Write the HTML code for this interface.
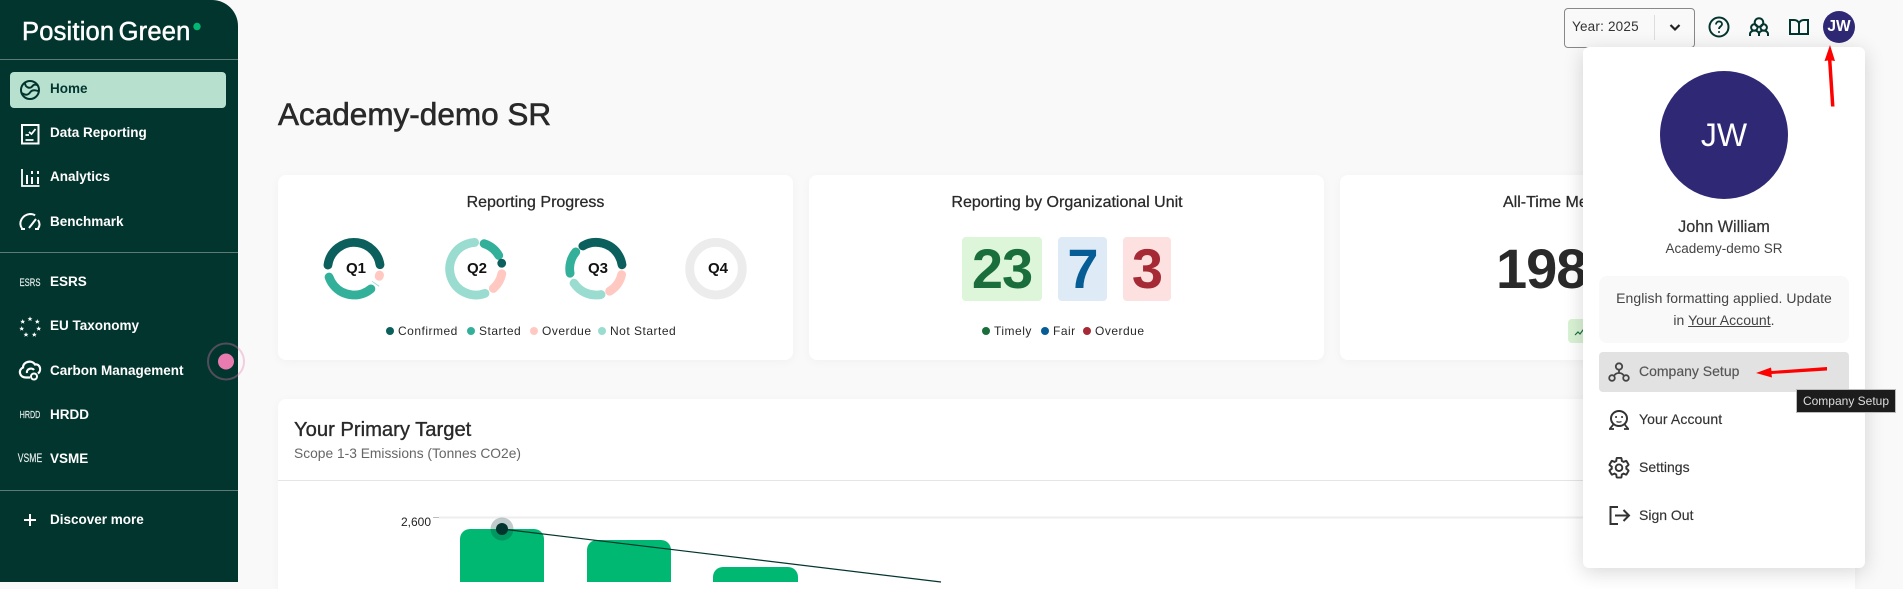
<!DOCTYPE html>
<html lang="en"><head><meta charset="utf-8"><title>Academy-demo SR</title>
<style>
html,body{margin:0;padding:0;width:1903px;height:582px;overflow:hidden;background:#f9f9f9;font-family:"Liberation Sans",sans-serif;color:#292929}
.a{position:absolute}
.t{position:absolute;white-space:nowrap;line-height:20px;height:20px}
.c{transform:translateX(-50%)}
#side{left:0;top:0;width:238px;height:582px;background:#03352f;border-top-right-radius:26px;overflow:hidden}
.n{font-size:13.5px;font-weight:700;color:#fff;left:50px}
.hr{left:0;width:238px;height:1px;background:#5c7b77}
.sm{color:#e8efee;-webkit-text-stroke:.15px #e8efee}
.card{background:#fff;border-radius:8px;box-shadow:0 2px 10px rgba(0,0,0,.035)}
.h{font-size:16px;color:#292929;-webkit-text-stroke:.25px #292929}
.l{font-size:12px;letter-spacing:.5px;color:#292929}
.q{font-size:15px;font-weight:700;color:#111}
.big{font-size:56px;font-weight:700;line-height:64px;text-align:center;border-radius:4px;letter-spacing:-1px}
.m{font-size:14px;left:1639px;color:#333;-webkit-text-stroke:.15px #333}
svg{position:absolute;left:0;top:0;overflow:visible}
</style></head><body>

<div id="side" class="a">
<div class="t" style="left:22px;top:17px;font-size:25.500px;line-height:30px;height:30px;color:#fff;letter-spacing:.2px;word-spacing:-3px;-webkit-text-stroke:.5px #fff">Position Green</div>
<div class="a hr" style="top:59px"></div>
<div class="a" style="left:10px;top:72px;width:216px;height:36px;background:#b7e0cf;border-radius:4px"></div>
<div class="t n" style="top:79px;color:#03352f">Home</div>
<div class="t n" style="top:123px">Data Reporting</div>
<div class="t n" style="top:167px">Analytics</div>
<div class="t n" style="top:212px">Benchmark</div>
<div class="a hr" style="top:252px"></div>
<div class="t sm" style="left:30px;top:273px;font-size:11px;transform:translateX(-50%) scaleX(.7)">ESRS</div><div class="t n" style="top:272px">ESRS</div>
<div class="t n" style="top:316px">EU Taxonomy</div>
<div class="t n" style="top:361px">Carbon Management</div>
<div class="t sm" style="left:30px;top:405px;font-size:10.500px;transform:translateX(-50%) scaleX(.68)">HRDD</div><div class="t n" style="top:405px">HRDD</div>
<div class="t sm" style="left:30px;top:449px;font-size:11.500px;transform:translateX(-50%) scaleX(.75)">VSME</div><div class="t n" style="top:449px">VSME</div>
<div class="a hr" style="top:490px"></div>
<div class="t n" style="top:510px">Discover more</div>
<svg width="238" height="582" fill="none" stroke="#fff" stroke-width="2">
<circle cx="197" cy="26.500" r="3.700" fill="#00b871" stroke="none"/>
<g stroke="#03352f"><circle cx="30" cy="90" r="9"/><path d="M21.500 93c2.500 1.500 5 2.500 7 1s2-3 4-3.500 5 0 6.500 1M25 82.500c0 3 1 4 3 5 3 1 4-1 5-2s3-1 5 0"/></g>
<rect x="22" y="125" width="16.500" height="18.500"/>
<path d="M29 132l2.500 2 4-5M25.500 135h3.500M25.500 140h8" stroke-width="1.800"/>
<path d="M22 169v17h17.500" stroke-width="1.800"/><path d="M27 175v9M32 171v3M32 177v7M38 171v3M38 177v7" stroke-width="2"/>
<path d="M22 228.500c-4-6 0-13.500 8-14.500 2 0 4 .5 5 1.500M38 220c2 3 2 6 0 8.500M29 228l7-9M21 229h4M35 229h4" stroke-width="2"/>
<g fill="#fff" stroke="none">
<polygon transform="translate(30 319)" points="0,-2.6 .7,-.8 2.5,-.8 1.100,.3 1.600,2.100 0,1 -1.600,2.100 -1.100,.3 -2.500,-.8 -.7,-.8"/>
<polygon transform="translate(37.300 321.700)" points="0,-2.6 .7,-.8 2.5,-.8 1.100,.3 1.600,2.100 0,1 -1.600,2.100 -1.100,.3 -2.500,-.8 -.7,-.8"/>
<polygon transform="translate(38.700 328.700)" points="0,-2.6 .7,-.8 2.5,-.8 1.100,.3 1.600,2.100 0,1 -1.600,2.100 -1.100,.3 -2.500,-.8 -.7,-.8"/>
<polygon transform="translate(34.300 334.700)" points="0,-2.6 .7,-.8 2.5,-.8 1.100,.3 1.600,2.100 0,1 -1.600,2.100 -1.100,.3 -2.500,-.8 -.7,-.8"/>
<polygon transform="translate(26 334.700)" points="0,-2.6 .7,-.8 2.5,-.8 1.100,.3 1.600,2.100 0,1 -1.600,2.100 -1.100,.3 -2.500,-.8 -.7,-.8"/>
<polygon transform="translate(21.700 328.700)" points="0,-2.6 .7,-.8 2.5,-.8 1.100,.3 1.600,2.100 0,1 -1.600,2.100 -1.100,.3 -2.500,-.8 -.7,-.8"/>
<polygon transform="translate(22.700 321.700)" points="0,-2.6 .7,-.8 2.5,-.8 1.100,.3 1.600,2.100 0,1 -1.600,2.100 -1.100,.3 -2.500,-.8 -.7,-.8"/>
</g>
<path d="M30 377.500h-4c-7 0-8-8-3-10 0-6 9-8 12-3 5-1 7 6 3 9M27 373c-1-4 5-6 7-3" stroke-width="2.200"/><circle cx="34" cy="376.500" r="3" stroke-width="2"/>
<path d="M30 514v12M24 520h12" stroke-width="2"/>
</svg>
</div>

<!-- main -->
<div class="t" style="left:278px;top:94px;line-height:40px;height:40px;font-size:31.500px;color:#292929;-webkit-text-stroke:.6px #292929">Academy-demo SR</div>

<div class="a card" style="left:278px;top:175px;width:515px;height:185px"></div>
<div class="a card" style="left:809px;top:175px;width:515px;height:185px"></div>
<div class="a card" style="left:1340px;top:175px;width:515px;height:185px"></div>
<div class="t h c" style="left:535.500px;top:193px">Reporting Progress</div>
<svg width="1903" height="582" fill="none" stroke-width="8.800" stroke-linecap="round">
<!-- Q1 -->
<circle cx="354" cy="268.700" r="26.300" pathLength="360" stroke="#0b5f5c" stroke-dasharray="164 999" transform="rotate(188 354 268.700)"/>
<circle cx="354" cy="268.700" r="26.300" pathLength="360" stroke="#ffc9c2" stroke-dasharray="3 999" transform="rotate(14 354 268.700)"/>
<circle cx="354" cy="268.700" r="26.300" pathLength="360" stroke="#9adccf" stroke-dasharray="2 999" stroke-linecap="butt" transform="rotate(34 354 268.700)"/>
<circle cx="354" cy="268.700" r="26.300" pathLength="360" stroke="#33b09a" stroke-dasharray="112 999" transform="rotate(50 354 268.700)"/>
<!-- Q2 -->
<circle cx="476" cy="268.700" r="26.300" pathLength="360" stroke="#9adccf" stroke-dasharray="198 999" transform="rotate(70 476 268.700)"/>
<circle cx="476" cy="268.700" r="26.300" pathLength="360" stroke="#33b09a" stroke-dasharray="42 999" transform="rotate(-72 476 268.700)"/>
<circle cx="476" cy="268.700" r="26.300" pathLength="360" stroke="#0b5f5c" stroke-dasharray=".1 999" transform="rotate(-12 476 268.700)"/>
<circle cx="476" cy="268.700" r="26.300" pathLength="360" stroke="#ffc9c2" stroke-dasharray="38 999" transform="rotate(11 476 268.700)"/>
<!-- Q3 -->
<circle cx="596" cy="268.700" r="26.300" pathLength="360" stroke="#0b5f5c" stroke-dasharray="112 999" transform="rotate(240 596 268.700)"/>
<circle cx="596" cy="268.700" r="26.300" pathLength="360" stroke="#ffc9c2" stroke-dasharray="46 999" transform="rotate(13 596 268.700)"/>
<circle cx="596" cy="268.700" r="26.300" pathLength="360" stroke="#9adccf" stroke-dasharray="68 999" transform="rotate(79 596 268.700)"/>
<circle cx="596" cy="268.700" r="26.300" pathLength="360" stroke="#33b09a" stroke-dasharray="50 999" transform="rotate(170 596 268.700)"/>
<!-- Q4 -->
<circle cx="716" cy="268.700" r="26.300" stroke="#ececec"/>
<g stroke="none">
<circle cx="390" cy="331" r="4" fill="#0b5f5c"/><circle cx="471" cy="331" r="4" fill="#33b09a"/><circle cx="534" cy="331" r="4" fill="#ffc9c2"/><circle cx="602" cy="331" r="4" fill="#9adccf"/>
<circle cx="986" cy="331" r="4" fill="#1a6e3c"/><circle cx="1045" cy="331" r="4" fill="#065d95"/><circle cx="1087" cy="331" r="4" fill="#a52a35"/>
</g>
</svg>
<div class="t c q" style="left:356px;top:259px">Q1</div>
<div class="t c q" style="left:477px;top:259px">Q2</div>
<div class="t c q" style="left:598px;top:259px">Q3</div>
<div class="t c q" style="left:718px;top:259px">Q4</div>
<div class="t l" style="left:398px;top:321px">Confirmed</div>
<div class="t l" style="left:479px;top:321px">Started</div>
<div class="t l" style="left:542px;top:321px">Overdue</div>
<div class="t l" style="left:610px;top:321px">Not Started</div>

<div class="t h c" style="left:1067px;top:193px">Reporting by Organizational Unit</div>
<div class="a big" style="left:962px;top:237px;width:80px;height:64px;background:#ddf5d8;color:#1a6e3c">23</div>
<div class="a big" style="left:1058px;top:237px;width:49px;height:64px;background:#deebf7;color:#065d95">7</div>
<div class="a big" style="left:1123px;top:237px;width:48px;height:64px;background:#fde0e0;color:#a52a35">3</div>
<div class="t l" style="left:994px;top:321px">Timely</div>
<div class="t l" style="left:1053px;top:321px">Fair</div>
<div class="t l" style="left:1095px;top:321px">Overdue</div>

<div class="t h" style="left:1503px;top:193px">All-Time Metric</div>
<div class="t" style="left:1496px;top:237px;font-size:56px;font-weight:700;line-height:64px;height:64px;color:#2a2a2a;letter-spacing:-1px">198</div>
<div class="a" style="left:1568px;top:319px;width:60px;height:24px;background:#d9f2d4;border-radius:4px"></div>
<svg width="1903" height="582" fill="none"><path d="M1575 335l3-3 2 2 3-4 3 3" stroke="#1a6e3c" stroke-width="1.200"/></svg>

<div class="a" style="left:278px;top:399px;width:1577px;height:190px;background:#fff;border-radius:8px 8px 0 0;box-shadow:0 2px 10px rgba(0,0,0,.035)"></div>
<div class="t" style="left:294px;top:420px;font-size:20.200px;color:#292929;-webkit-text-stroke:.35px #292929">Your Primary Target</div>
<div class="t" style="left:294px;top:444px;font-size:13.800px;color:#666">Scope 1-3 Emissions (Tonnes CO2e)</div>
<div class="a" style="left:278px;top:480px;width:1577px;height:1px;background:#e5e5e5"></div>
<div class="t" style="left:401px;top:512px;font-size:12px;color:#222">2,600</div>
<svg width="1903" height="582" fill="none">
<path d="M433 517.500h6" stroke="#bbb"/><path d="M439 517.500H1855" stroke="#eee" stroke-width="2"/>
<path d="M460 582v-43a10 10 0 0 1 10-10h64a10 10 0 0 1 10 10v43zM587 582v-32a10 10 0 0 1 10-10h64a10 10 0 0 1 10 10v32zM713 582v-5a10 10 0 0 1 10-10h65a10 10 0 0 1 10 10v5z" fill="#00b871"/>
<path d="M502 529L941 582" stroke="#03352f" stroke-width="1.200"/>
<circle cx="502" cy="529" r="11.500" fill="#03352f" fill-opacity=".25"/><circle cx="502" cy="529" r="6" fill="#03352f"/>
</svg>

<!-- top bar -->
<div class="a" style="left:1564px;top:8px;width:129px;height:38px;border:1px solid #888;border-radius:4px"></div>
<div class="t" style="left:1572px;top:17px;font-size:13.500px;color:#333;letter-spacing:.2px">Year: 2025</div>
<div class="a" style="left:1654px;top:15px;width:1px;height:25px;background:#ddd"></div>
<svg width="1903" height="582" fill="none" stroke="#03352f" stroke-width="2">
<path d="M1670.500 25l4.500 4.500 4.500-4.500" stroke="#222" stroke-width="2.200"/>
<circle cx="1719" cy="27" r="9.500"/><path d="M1716 24.500c0-4 6-4 6-.5 0 2.500-3 2.500-3 5" stroke-width="1.800"/><circle cx="1719" cy="32" r="1" fill="#03352f" stroke="none"/>
<circle cx="1759" cy="22.500" r="4.300"/><circle cx="1754.300" cy="27.500" r="3.200"/><circle cx="1763.700" cy="27.500" r="3.200"/>
<path d="M1750 36v-2a4.500 3.500 0 0 1 9 0v2M1759 34a4.500 3.500 0 0 1 9 0v2"/>
<path d="M1799 23c-1-2-3-3-5-3h-4v14h9M1799 23c1-2 3-3 5-3h4v14h-9M1799 23v11"/>
<circle cx="1839" cy="27" r="16" fill="#2f2975" stroke="none"/>
</svg>
<div class="t c" style="left:1839px;top:17px;font-size:15.500px;font-weight:700;color:#fff">JW</div>

<!-- dropdown -->
<div class="a" style="left:1583px;top:47px;width:282px;height:521px;background:#fff;border-radius:6px;box-shadow:0 4px 20px rgba(0,0,0,.16)"></div>
<div class="a" style="left:1660px;top:71px;width:128px;height:128px;border-radius:50%;background:#2f2975"></div>
<div class="t c" style="left:1724px;top:115px;line-height:40px;height:40px;font-size:32px;color:#fff">JW</div>
<div class="t c" style="left:1724px;top:217px;font-size:16.200px;color:#333;-webkit-text-stroke:.2px #333">John William</div>
<div class="t c" style="left:1724px;top:239px;font-size:13.500px;color:#444">Academy-demo SR</div>
<div class="a" style="left:1599px;top:276px;width:250px;height:67px;background:#f9f9f9;border-radius:8px"></div>
<div class="t c" style="left:1724px;top:288px;font-size:14px;color:#444;letter-spacing:.05px">English formatting applied. Update</div>
<div class="t c" style="left:1724px;top:310px;font-size:14px;color:#444;letter-spacing:.05px">in <span style="text-decoration:underline">Your Account</span>.</div>
<div class="a" style="left:1599px;top:352px;width:250px;height:40px;background:#e2e2e2;border-radius:4px"></div>
<div class="t m" style="top:361px;color:#555;-webkit-text-stroke:.15px #555">Company Setup</div>
<div class="t m" style="top:409px;letter-spacing:.1px">Your Account</div>
<div class="t m" style="top:457px">Settings</div>
<div class="t m" style="top:505px">Sign Out</div>
<svg width="1903" height="582" fill="none" stroke="#333" stroke-width="2">
<g stroke="#444" stroke-width="1.800"><circle cx="1619" cy="366.500" r="3.200"/><circle cx="1612" cy="378" r="2.800"/><circle cx="1626" cy="378" r="2.800"/><path d="M1619 370v3c-2.500 0-4 1-5 3M1619 373c2.500 0 4 1 5 3"/></g>
<ellipse cx="1619" cy="418.500" rx="8" ry="7.500"/><path d="M1613.500 424c-1 2-2 3-3.500 4.500M1624.500 424c1 2 2 3 3.500 4.500M1609 429h5M1624 429h5" stroke-width="1.800"/><path d="M1616 417h.1M1622 417h.1" stroke-width="2" stroke-linecap="round"/><path d="M1616.500 421.500c1 .8 4 .8 5 0" stroke-width="1.300"/>
<circle cx="1619" cy="467.700" r="3.300" stroke-width="1.900"/>
<path transform="translate(1606.800 455.500) scale(1.020)" stroke-width="1.900" d="M19.140 12.940c.04-.3.06-.61.06-.94 0-.32-.02-.64-.07-.94l2.030-1.580c.18-.14.23-.41.12-.61l-1.920-3.320c-.12-.22-.37-.29-.59-.22l-2.390.96c-.5-.38-1.030-.7-1.620-.94l-.36-2.540c-.04-.24-.24-.41-.48-.41h-3.840c-.24 0-.43.17-.47.41l-.36 2.540c-.59.24-1.130.57-1.620.94l-2.390-.96c-.22-.08-.47 0-.59.22L2.740 8.870c-.12.21-.08.47.12.61l2.030 1.580c-.05.3-.09.63-.09.94s.02.64.07.94l-2.030 1.580c-.18.14-.23.41-.12.61l1.920 3.320c.12.22.37.29.59.22l2.390-.96c.5.38 1.030.7 1.620.94l.36 2.540c.05.24.24.41.48.41h3.840c.24 0 .44-.17.47-.41l.36-2.540c.59-.24 1.130-.56 1.620-.94l2.390.96c.22.08.47 0 .59-.22l1.920-3.320c.12-.22.07-.47-.12-.61l-2.010-1.580z"/>
<path d="M1618 507h-7.500v17h7.500M1615 515.500h13.500M1623.500 510l5.500 5.500-5.500 5.500"/>
</svg>
<!-- tooltip -->
<div class="a" style="left:1796px;top:389px;width:100px;height:24px;background:#1c1c1c;box-shadow:inset 0 0 0 1px #bbb"></div>
<div class="t c" style="left:1846px;top:391px;font-size:12px;color:#ddd">Company Setup</div>
<!-- annotations -->
<svg width="1903" height="582" fill="red" stroke="none">
<path d="M1830 45l5 16-3.500-.5 3 46h-3.500l-3-46-3.500.5z"/>
<path d="M1756 373l15-5.500 .5 3.500 55.500-4v3.500l-55.500 3.500 .5 3.500z"/>
</svg>
<!-- pointer -->
<svg width="1903" height="582" fill="none">
<circle cx="226" cy="361.500" r="18" stroke="#e87cb0" stroke-opacity=".35" stroke-width="2"/>
<circle cx="226" cy="361.500" r="8" fill="#e87cb0"/>
</svg>
</body></html>
